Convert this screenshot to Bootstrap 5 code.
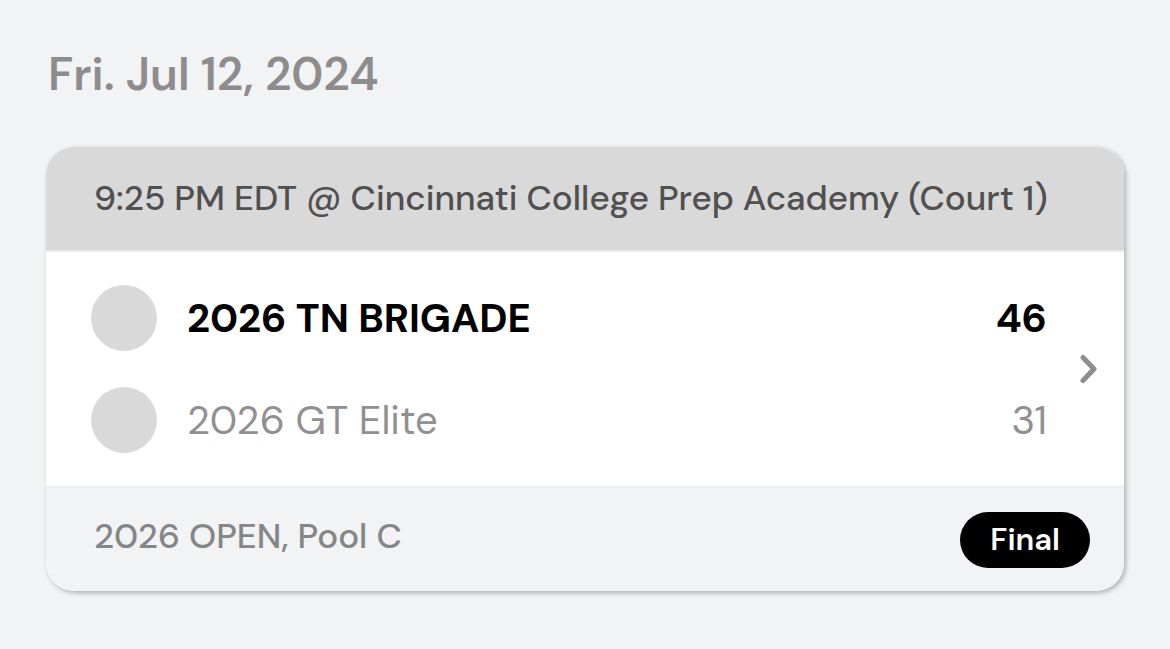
<!DOCTYPE html>
<html lang="en">
<head>
<meta charset="utf-8">
<meta name="viewport" content="width=device-width, initial-scale=1">
<title>Game schedule</title>
<link href="https://cdn.jsdelivr.net/npm/bootstrap@5.3.0/dist/css/bootstrap.min.css" rel="stylesheet">
<style>
body{background:#f1f3f5;font-family:"DM Sans",Lato,"Open Sans",sans-serif;color:#000}
.schedule{padding:48px 46px 56px}
.day{font-size:46px;line-height:52px;font-weight:600;color:#8f8c8e;margin:0 0 47px 2px}
.game{border:0;border-radius:28px;overflow:hidden;box-shadow:2px 2px 5px rgba(0,0,0,.28)}
.game-head{background:#d9d9d9;color:#505050;font-size:35px;line-height:54px;padding:24px 40px 25px 48px;border-bottom:2px solid #ebebeb;font-weight:500}
.teams{padding:33px 0 33px 45px}
.team-list{gap:36px}
.team{gap:30px;font-size:40px;line-height:48px}
.logo{width:66px;height:66px;background:#d9d9d9}
.winner{font-weight:700}
.loser{color:#918f90}
.details{width:77px;padding-left:32px;color:#8e8e8e}
.game-foot{background:#f1f3f5;border-top:2px solid #edeef0;padding:24px 34px 23px 48px;color:#858687;font-size:35px;line-height:48px;font-weight:500}
.final{background:#000;font-size:31px;line-height:36px;padding:10px 30px;font-weight:600}
</style>
</head>
<body>
<main class="schedule">
<h1 class="day">Fri. Jul 12, 2024</h1>
<article class="card game">
<div class="game-head">9:25 PM EDT @ Cincinnati College Prep Academy (Court 1)</div>
<div class="d-flex align-items-center bg-white teams">
<div class="flex-grow-1 d-flex flex-column team-list">
<div class="team winner d-flex align-items-center"><span class="logo rounded-circle"></span><span class="flex-grow-1">2026 TN BRIGADE</span><span>46</span></div>
<div class="team loser d-flex align-items-center"><span class="logo rounded-circle"></span><span class="flex-grow-1">2026 GT Elite</span><span>31</span></div>
</div>
<a class="details d-block" href="#" aria-label="Game details"><svg class="d-block" width="18" height="30" viewBox="0 0 18 30" fill="none" stroke="currentColor" stroke-width="5" stroke-linecap="round" stroke-linejoin="round" aria-hidden="true"><path d="M4 3.5 15 15 4 26.5"/></svg></a>
</div>
<div class="game-foot d-flex align-items-start justify-content-between"><span>2026 OPEN, Pool C</span><span class="badge rounded-pill final">Final</span></div>
</article>
</main>
<script src="https://cdn.jsdelivr.net/npm/bootstrap@5.3.0/dist/js/bootstrap.bundle.min.js"></script>
</body>
</html>
